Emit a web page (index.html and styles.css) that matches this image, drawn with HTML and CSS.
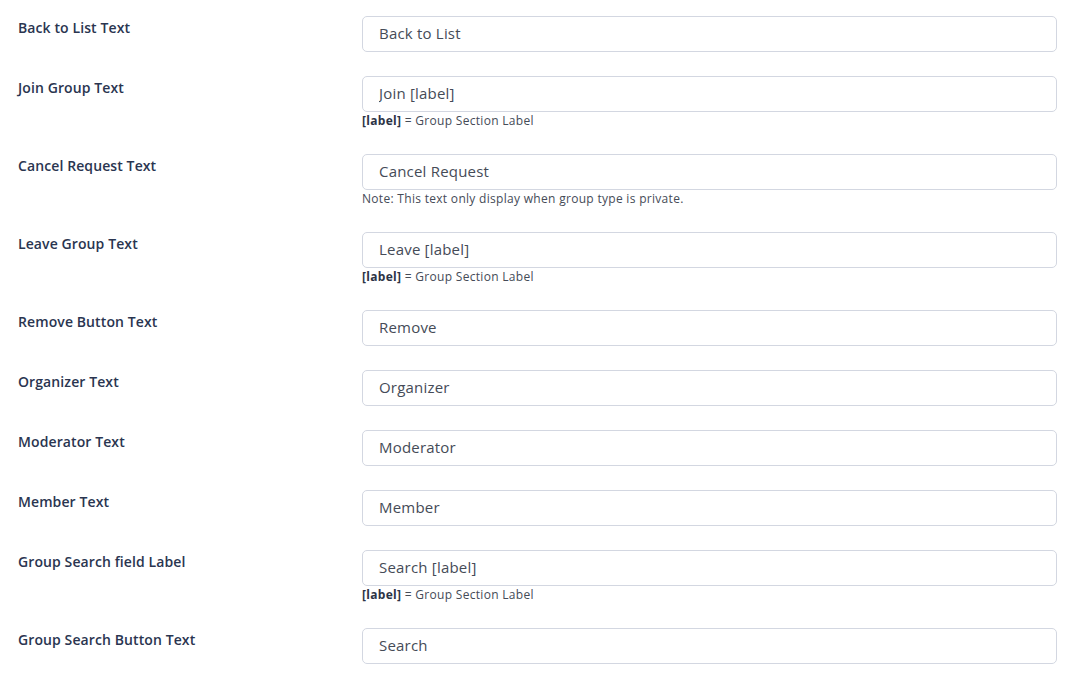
FILE: index.html
```html
<!DOCTYPE html>
<html lang="en">
<head>
  <meta charset="UTF-8">
  <meta name="viewport" content="width=device-width, initial-scale=1.0">
  <title>Group Text Settings</title>
  <link rel="stylesheet" href="styles.css">
</head>
<body>
  <div class="settings">
    <div class="setting-row">
      <label class="setting-label">Back to List Text</label>
      <div class="setting-field">
        <input type="text" class="text-input" value="Back to List">
      </div>
    </div>
    <div class="setting-row">
      <label class="setting-label">Join Group Text</label>
      <div class="setting-field">
        <input type="text" class="text-input" value="Join [label]">
        <p class="help-text"><strong>[label]</strong> = Group Section Label</p>
      </div>
    </div>
    <div class="setting-row">
      <label class="setting-label">Cancel Request Text</label>
      <div class="setting-field">
        <input type="text" class="text-input" value="Cancel Request">
        <p class="help-text">Note: This text only display when group type is private.</p>
      </div>
    </div>
    <div class="setting-row">
      <label class="setting-label">Leave Group Text</label>
      <div class="setting-field">
        <input type="text" class="text-input" value="Leave [label]">
        <p class="help-text"><strong>[label]</strong> = Group Section Label</p>
      </div>
    </div>
    <div class="setting-row">
      <label class="setting-label">Remove Button Text</label>
      <div class="setting-field">
        <input type="text" class="text-input" value="Remove">
      </div>
    </div>
    <div class="setting-row">
      <label class="setting-label">Organizer Text</label>
      <div class="setting-field">
        <input type="text" class="text-input" value="Organizer">
      </div>
    </div>
    <div class="setting-row">
      <label class="setting-label">Moderator Text</label>
      <div class="setting-field">
        <input type="text" class="text-input" value="Moderator">
      </div>
    </div>
    <div class="setting-row">
      <label class="setting-label">Member Text</label>
      <div class="setting-field">
        <input type="text" class="text-input" value="Member">
      </div>
    </div>
    <div class="setting-row">
      <label class="setting-label">Group Search field Label</label>
      <div class="setting-field">
        <input type="text" class="text-input" value="Search [label]">
        <p class="help-text"><strong>[label]</strong> = Group Section Label</p>
      </div>
    </div>
    <div class="setting-row">
      <label class="setting-label">Group Search Button Text</label>
      <div class="setting-field">
        <input type="text" class="text-input" value="Search">
      </div>
    </div>
  </div>
</body>
</html>
```

FILE: styles.css
```css
body {
  font-family: "Open Sans", Arial, sans-serif;
  margin: 0;
  padding: 0;
  background: #fff;
}
.settings {
  display: flex;
  flex-direction: column;
  gap: 24px;
  padding: 16px 22px 0 18px;
}
.setting-row {
  display: grid;
  grid-template-columns: 344px 1fr;
}
.setting-label {
  font-size: 14px;
  font-weight: 600;
  line-height: 24px;
  letter-spacing: 0.1px;
  color: #2a3550;
}
.setting-field {
  display: flex;
  flex-direction: column;
}
.text-input {
  box-sizing: border-box;
  height: 36px;
  padding: 0 16px 2px;
  border: 1px solid #d3d7e1;
  border-radius: 5px;
  font-family: inherit;
  font-size: 15px;
  letter-spacing: 0.2px;
  color: #454b57;
  background: #fff;
  outline: none;
}
.help-text {
  margin: 0;
  font-size: 12px;
  line-height: 18px;
  letter-spacing: 0.3px;
  color: #454b57;
}
.help-text strong {
  color: #2c3345;
  font-weight: 700;
}
```
